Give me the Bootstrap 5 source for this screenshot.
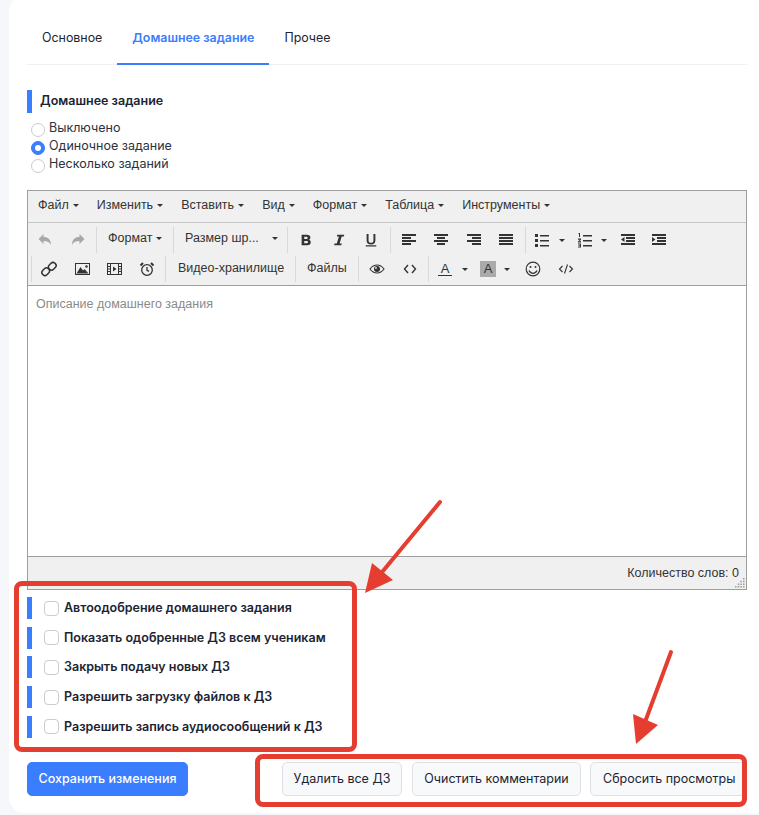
<!DOCTYPE html>
<html lang="ru">
<head>
<meta charset="UTF-8" />
<meta name="viewport" content="width=device-width, initial-scale=1.0" />
<title>Домашнее задание</title>
<link href="https://cdn.jsdelivr.net/npm/bootstrap@5.3.0/dist/css/bootstrap.min.css" rel="stylesheet" />
<style>
html, body { height: 815px; overflow: hidden; }
body { background: #f6f7fa; font-family: "Inter", "Liberation Sans", sans-serif; font-size: 12.5px; color: #1c2433; position: relative; }
.lesson-card { position: absolute; left: 9px; top: -4px; width: 770px; height: 817px; background: #fff; border-radius: 16px; padding: 4px 32px 0 18px; }
.tab-line { height: 65px; border-bottom: 1px solid #eef0f5; width: 720px; }
.tab-line a { display: block; height: 65px; padding: 30px 15px 0; line-height: 16px; color: #1c2433; text-decoration: none; font-size: 12.4px; }
.tab-line a.on { color: #3b7dff; font-weight: 600; border-bottom: 2px solid #3b7dff; }
.blue-title { border-left: 5px solid #3b7dff; height: 23px; margin-top: 25px; padding-left: 8px; line-height: 22px; font-weight: 600; font-size: 12.5px; color: #1c2433; }
.radio-list { margin-top: 6px; }
.radio-row { height: 18px; padding-left: 4px; line-height: 17px; color: #2a3240; }
.radio-row .form-check-input { width: 14px; height: 14px; margin: 4px 4px 0 0; border-color: #ccc; flex: none; }
.radio-row .form-check-input:checked { background-color: #3b7dff; border-color: #3b7dff; }
.editor-box { width: 720px; height: 400px; border: 1px solid #9e9e9e; margin-top: 17px; font-family: "Liberation Sans", sans-serif; font-size: 12.5px; color: #333; background: #f0f0f0; }
.menu-row { height: 32px; padding-left: 1px; border-bottom: 1px solid #c5c5c5; }
.menu-row span { padding: 0 9px; line-height: 28px; }
.caret-dn { display: inline-block; width: 0; height: 0; border-left: 3px solid transparent; border-right: 3px solid transparent; border-top: 3px solid #333; margin-left: 4px; vertical-align: 2px; }
.caret-dn.flat { margin: 0; }
.tool-row.first { padding: 4px 0 0 1px; height: 32px; }
.tool-row.second { padding: 1px 0 0 3px; height: 30px; }
.tool-grp { border-left: 1px solid #d9d9d9; height: 26px; display: flex; align-items: center; margin-left: 2px; padding-left: 2px; flex: none; }
.tool-grp.bare { border-left: 0; margin-left: 0; padding-left: 0; }
.tool-grp.lead { margin-left: 0; padding-left: 1px; }
.tool-grp.g-fmt { width: 75px; }
.tool-grp.g-size { width: 112px; }
.tool-grp.g-video { width: 128px; }
.tool-grp.g-files { width: 61px; }
.tool-btn { width: 32.5px; height: 26px; display: flex; align-items: center; justify-content: center; flex: none; }
.tool-btn.tiny { width: 12px; }
.tool-btn.w28 { width: 28px; }
.tool-btn.w30 { width: 30px; padding-left: 4px; }
.tool-btn.w33 { width: 33px; padding-left: 3px; }
.tool-btn.w40 { width: 40px; }
.tool-btn.w26 { width: 26px; }
.tool-txt { padding: 0 0 2px 9px; white-space: nowrap; line-height: 22px; }
.first .tool-txt { padding-bottom: 4px; }
.g-video .tool-txt { padding-left: 10px; }
.caret-far { margin-left: 13px; }
.edit-area { height: 272px; background: #fff; border-top: 1px solid #9e9e9e; border-bottom: 1px solid #9e9e9e; padding: 9px 8px; color: #8a8a8a; line-height: 18px; }
.status-row { height: 32px; padding-right: 7px; line-height: 32px; text-align: right; position: relative; }
.grip { position: absolute; right: 1px; bottom: 1px; }
.opt-list { margin-top: 7px; gap: 7.7px; }
.opt-row { height: 22px; border-left: 5px solid #3b7dff; padding-left: 12px; font-weight: 600; font-size: 12.5px; line-height: 22px; color: #1c2433; }
.opt-row .form-check-input { width: 15px; height: 15px; margin: 0 5px 0 0; border-color: #ccc; flex: none; border-radius: 4px; }
.foot-row { margin-top: 24px; width: 720px; }
.save-btn { background: #3b7dff; border-color: #3b7dff; font-size: 12.5px; height: 34px; width: 161px; padding: 1px 0 0; border-radius: 5px; font-weight: 500; }
.grey-btn { background: #f8f9fb; border: 1px solid #dfe1e6; color: #1c2433; font-size: 12.5px; height: 34px; padding: 1px 0 0; border-radius: 5px; }
.grey-del { width: 120px; margin-right: 10px; }
.grey-com { width: 169px; margin-right: 9px; }
.grey-view { width: 157px; text-align: left; padding-left: 12px; }
.red-box { position: absolute; border: 5px solid #e53e30; border-radius: 8px; pointer-events: none; }
.red-one { left: 14px; top: 581px; width: 343px; height: 171px; }
.red-two { left: 255px; top: 754px; width: 492px; height: 53px; }
.arrows { position: absolute; left: 0; top: 0; pointer-events: none; }
</style>
</head>
<body>
<svg width="0" height="0" class="position-absolute">
  <symbol id="al-left" viewBox="0 0 16 16"><path fill="#333" d="M1 2h14v2H1zM1 5h9v2H1zM1 8h14v2H1zM1 11h9v2H1z"/></symbol>
  <symbol id="al-center" viewBox="0 0 16 16"><path fill="#333" d="M1 2h14v2H1zM4 5h8v2H4zM1 8h14v2H1zM4 11h8v2H4z"/></symbol>
  <symbol id="al-right" viewBox="0 0 16 16"><path fill="#333" d="M1 2h14v2H1zM6 5h9v2H6zM1 8h14v2H1zM6 11h9v2H6z"/></symbol>
  <symbol id="al-full" viewBox="0 0 16 16"><path fill="#333" d="M1 2h14v2H1zM1 5h14v2H1zM1 8h14v2H1zM1 11h14v2H1z"/></symbol>
</svg>

<div class="lesson-card">
  <nav class="tab-line d-flex">
    <a href="#">Основное</a>
    <a href="#" class="on">Домашнее задание</a>
    <a href="#">Прочее</a>
  </nav>

  <div class="blue-title">Домашнее задание</div>
  <div class="radio-list">
    <label class="radio-row d-flex"><input class="form-check-input" type="radio" name="hw" />Выключено</label>
    <label class="radio-row d-flex"><input class="form-check-input" type="radio" name="hw" checked />Одиночное задание</label>
    <label class="radio-row d-flex"><input class="form-check-input" type="radio" name="hw" />Несколько заданий</label>
  </div>

  <div class="editor-box">
    <div class="menu-row d-flex">
      <span>Файл<i class="caret-dn"></i></span>
      <span>Изменить<i class="caret-dn"></i></span>
      <span>Вставить<i class="caret-dn"></i></span>
      <span>Вид<i class="caret-dn"></i></span>
      <span>Формат<i class="caret-dn"></i></span>
      <span>Таблица<i class="caret-dn"></i></span>
      <span>Инструменты<i class="caret-dn"></i></span>
    </div>

    <div class="tool-row first d-flex">
      <div class="tool-grp bare">
        <div class="tool-btn"><svg width="16" height="16" viewBox="0 0 16 16"><path fill="#a8a8a8" d="M6.500 2v3C11 5 14 7.500 14 13c-1.500-3-3.500-4-7.500-4v3L1.500 7z"/></svg></div>
        <div class="tool-btn"><svg width="16" height="16" viewBox="0 0 16 16"><path fill="#a8a8a8" d="M9.500 2v3C5 5 2 7.500 2 13c1.500-3 3.500-4 7.500-4v3l5-5z"/></svg></div>
      </div>
      <div class="tool-grp g-fmt"><div class="tool-txt">Формат<i class="caret-dn"></i></div></div>
      <div class="tool-grp g-size"><div class="tool-txt">Размер шр...<i class="caret-dn caret-far"></i></div></div>
      <div class="tool-grp">
        <div class="tool-btn"><svg width="14" height="14" viewBox="0 0 16 16"><path fill="#333" fill-rule="evenodd" d="M3 2h6c2.500 0 4 1.200 4 3.200 0 1.300-.7 2.200-1.800 2.600 1.500.4 2.300 1.400 2.300 2.900 0 2.200-1.600 3.300-4.200 3.300H3zM6 4.300v2.600h2.300c1 0 1.600-.5 1.600-1.300s-.6-1.300-1.600-1.300zM6 9v2.700h2.600c1.100 0 1.700-.5 1.700-1.400S9.700 9 8.600 9z"/></svg></div>
        <div class="tool-btn"><svg width="14" height="14" viewBox="0 0 16 16"><path fill="#333" d="M6 2h8l-.4 2h-2.500L8.700 12h2.400l-.4 2H2.500l.4-2h2.600L7.900 4H5.500z"/></svg></div>
        <div class="tool-btn"><svg width="14" height="14" viewBox="0 0 16 16"><path fill="#333" d="M3 1h2.200v7.500c0 1.700 1 2.600 2.800 2.600s2.800-.9 2.800-2.600V1H13v7.500C13 11.400 11.100 13 8 13S3 11.400 3 8.500zM2 14h12v1.500H2z"/></svg></div>
      </div>
      <div class="tool-grp">
        <div class="tool-btn"><svg width="16" height="16"><use href="#al-left"/></svg></div>
        <div class="tool-btn"><svg width="16" height="16"><use href="#al-center"/></svg></div>
        <div class="tool-btn"><svg width="16" height="16"><use href="#al-right"/></svg></div>
        <div class="tool-btn"><svg width="16" height="16"><use href="#al-full"/></svg></div>
      </div>
      <div class="tool-grp">
        <div class="tool-btn w28"><svg width="16" height="16" viewBox="0 0 16 16"><path fill="#333" d="M1 2h3v3H1zM1 7h3v3H1zM1 12h3v3H1zM6 3h9v1.500H6zM6 8h9v1.500H6zM6 13h9v1.500H6z"/></svg></div>
        <div class="tool-btn tiny"><i class="caret-dn flat"></i></div>
        <div class="tool-btn w30"><svg width="16" height="16" viewBox="0 0 16 16"><path fill="#333" d="M1.500 1h1.500v4H2V2h-.5zM1 6.500h3V8L2.200 9.300H4V10.500H1V9.400l1.800-1.600H1zM1 11.500h3v4H1v-1h2v-.5H1.500v-.8H3v-.7H1zM6 3h9v1.500H6zM6 8h9v1.500H6zM6 13h9v1.500H6z"/></svg></div>
        <div class="tool-btn tiny"><i class="caret-dn flat"></i></div>
        <div class="tool-btn w33"><svg width="16" height="16" viewBox="0 0 16 16"><path fill="#333" d="M1 2h14v2H1zM6 5h9v2H6zM6 8h9v2H6zM1 11h14v2H1zM4.500 5v5L1 7.500z"/></svg></div>
        <div class="tool-btn"><svg width="16" height="16" viewBox="0 0 16 16"><path fill="#333" d="M1 2h14v2H1zM6 5h9v2H6zM6 8h9v2H6zM1 11h14v2H1zM1 5v5l3.500-2.500z"/></svg></div>
      </div>
    </div>

    <div class="tool-row second d-flex">
      <div class="tool-grp lead">
        <div class="tool-btn"><svg width="16" height="16" viewBox="0 0 16 16" fill="none" stroke="#333" stroke-width="1.500"><rect x="8.300" y="1.300" width="6" height="8" rx="2.800" transform="rotate(45 11.300 5.300)"/><rect x="1.700" y="6.700" width="6" height="8" rx="2.800" transform="rotate(45 4.700 10.700)"/></svg></div>
        <div class="tool-btn"><svg width="16" height="16" viewBox="0 0 16 16"><path fill="#333" fill-rule="evenodd" d="M1 2h15v12H1zM2 3v10h13V3z"/><path fill="#333" d="M2.500 12.500 6.500 6l2.500 3.500 1.500-1.500 4 4.500z"/><circle cx="12.500" cy="5.500" r="1.200" fill="#333"/></svg></div>
        <div class="tool-btn"><svg width="16" height="16" viewBox="0 0 16 16"><path fill="#333" d="M1 2h15v12H1z"/><path fill="#f0f0f0" d="M2 3h2v2H2zM2 6h2v1.500H2zM2 8.500h2V10H2zM2 11h2v2H2zM13 3h2v2h-2zM13 6h2v1.500h-2zM13 8.500h2V10h-2zM13 11h2v2h-2zM5 3h7v10H5z"/><path fill="#333" d="M7 5.500 10.500 8 7 10.500z"/></svg></div>
        <div class="tool-btn"><svg width="16" height="16" viewBox="0 0 16 16" fill="none" stroke="#333" stroke-width="1.300"><circle cx="8" cy="9" r="5.300"/><path d="M8 6v3.300l2 1"/><path stroke-width="2" d="M1.500 4.500 4 2M14.500 4.500 12 2"/></svg></div>
      </div>
      <div class="tool-grp g-video"><div class="tool-txt">Видео-хранилище</div></div>
      <div class="tool-grp g-files"><div class="tool-txt">Файлы</div></div>
      <div class="tool-grp">
        <div class="tool-btn"><svg width="16" height="16" viewBox="0 0 16 16"><path fill="none" stroke="#333" stroke-width="1.200" d="M1 8c2-2.800 4.300-4 7-4s5 1.200 7 4c-2 2.800-4.300 4-7 4S3 10.800 1 8z"/><circle cx="8" cy="8" r="3" fill="#333"/><circle cx="7" cy="7" r=".9" fill="#f0f0f0"/></svg></div>
        <div class="tool-btn"><svg width="16" height="16" viewBox="0 0 16 16" fill="none" stroke="#333" stroke-width="1.400"><path d="M6 4 2.500 8 6 12M10 4l3.500 4L10 12"/></svg></div>
      </div>
      <div class="tool-grp">
        <div class="tool-btn w28"><svg width="16" height="16" viewBox="0 0 16 16"><text x="8" y="11.500" text-anchor="middle" font-family="Liberation Sans, sans-serif" font-size="13" fill="#333">A</text><path fill="#333" d="M1 14h14v1H1z"/></svg></div>
        <div class="tool-btn tiny"><i class="caret-dn flat"></i></div>
        <div class="tool-btn w30"><svg width="16" height="16" viewBox="0 0 16 16"><path fill="#aaa" d="M0 0h16v16H0z"/><text x="8" y="12" text-anchor="middle" font-family="Liberation Sans, sans-serif" font-size="13" fill="#333">A</text></svg></div>
        <div class="tool-btn tiny"><i class="caret-dn flat"></i></div>
        <div class="tool-btn w40"><svg width="16" height="16" viewBox="0 0 16 16" fill="none" stroke="#333" stroke-width="1.200"><circle cx="8" cy="8" r="6.800"/><path stroke-width="1.300" d="M4 9.500c1 2 2.400 2.800 4 2.800s3-.8 4-2.800"/><circle cx="5.500" cy="6" r="1" fill="#333" stroke="none"/><circle cx="10.500" cy="6" r="1" fill="#333" stroke="none"/></svg></div>
        <div class="tool-btn w26"><svg width="16" height="16" viewBox="0 0 16 16" fill="none" stroke="#333" stroke-width="1.100"><path d="M4.500 5 1.500 8l3 3M11.500 5l3 3-3 3M9.500 3.500l-3 9"/></svg></div>
      </div>
    </div>

    <div class="edit-area">Описание домашнего задания</div>
    <div class="status-row">Количество слов: 0
      <svg class="grip" width="10" height="10" viewBox="0 0 10 10"><path fill="#9a9a9a" d="M8 0h1.500v1.500H8zM8 2.700h1.500v1.500H8zM5.300 2.700h1.500v1.500H5.300zM8 5.400h1.500v1.500H8zM5.300 5.400h1.500v1.500H5.300zM2.700 5.400h1.500v1.500H2.700zM8 8h1.500v1.500H8zM5.300 8h1.500v1.500H5.300zM2.700 8h1.500v1.500H2.700zM0 8h1.500v1.500H0z"/></svg>
    </div>
  </div>

  <div class="opt-list d-flex flex-column">
    <label class="opt-row d-flex align-items-center"><input class="form-check-input" type="checkbox" />Автоодобрение домашнего задания</label>
    <label class="opt-row d-flex align-items-center"><input class="form-check-input" type="checkbox" />Показать одобренные ДЗ всем ученикам</label>
    <label class="opt-row d-flex align-items-center"><input class="form-check-input" type="checkbox" />Закрыть подачу новых ДЗ</label>
    <label class="opt-row d-flex align-items-center"><input class="form-check-input" type="checkbox" />Разрешить загрузку файлов к ДЗ</label>
    <label class="opt-row d-flex align-items-center"><input class="form-check-input" type="checkbox" />Разрешить запись аудиосообщений к ДЗ</label>
  </div>

  <div class="foot-row d-flex justify-content-between">
    <button type="button" class="btn btn-primary save-btn">Сохранить изменения</button>
    <div class="d-flex">
      <button type="button" class="btn grey-btn grey-del">Удалить все ДЗ</button>
      <button type="button" class="btn grey-btn grey-com">Очистить комментарии</button>
      <button type="button" class="btn grey-btn grey-view">Сбросить просмотры</button>
    </div>
  </div>
</div>

<div class="red-box red-one"></div>
<div class="red-box red-two"></div>
<svg class="arrows" width="759" height="815" viewBox="0 0 759 815">
  <path d="M440 502 378 577" stroke="#e53e30" stroke-width="4" stroke-linecap="round" fill="none"/>
  <path fill="#e53e30" d="M365 593 372 563 393 580z"/>
  <path d="M671 652 645 722" stroke="#e53e30" stroke-width="4" stroke-linecap="round" fill="none"/>
  <path fill="#e53e30" d="M636 744 633 714 658 725z"/>
</svg>

<script src="https://cdn.jsdelivr.net/npm/bootstrap@5.3.0/dist/js/bootstrap.bundle.min.js"></script>
</body>
</html>
